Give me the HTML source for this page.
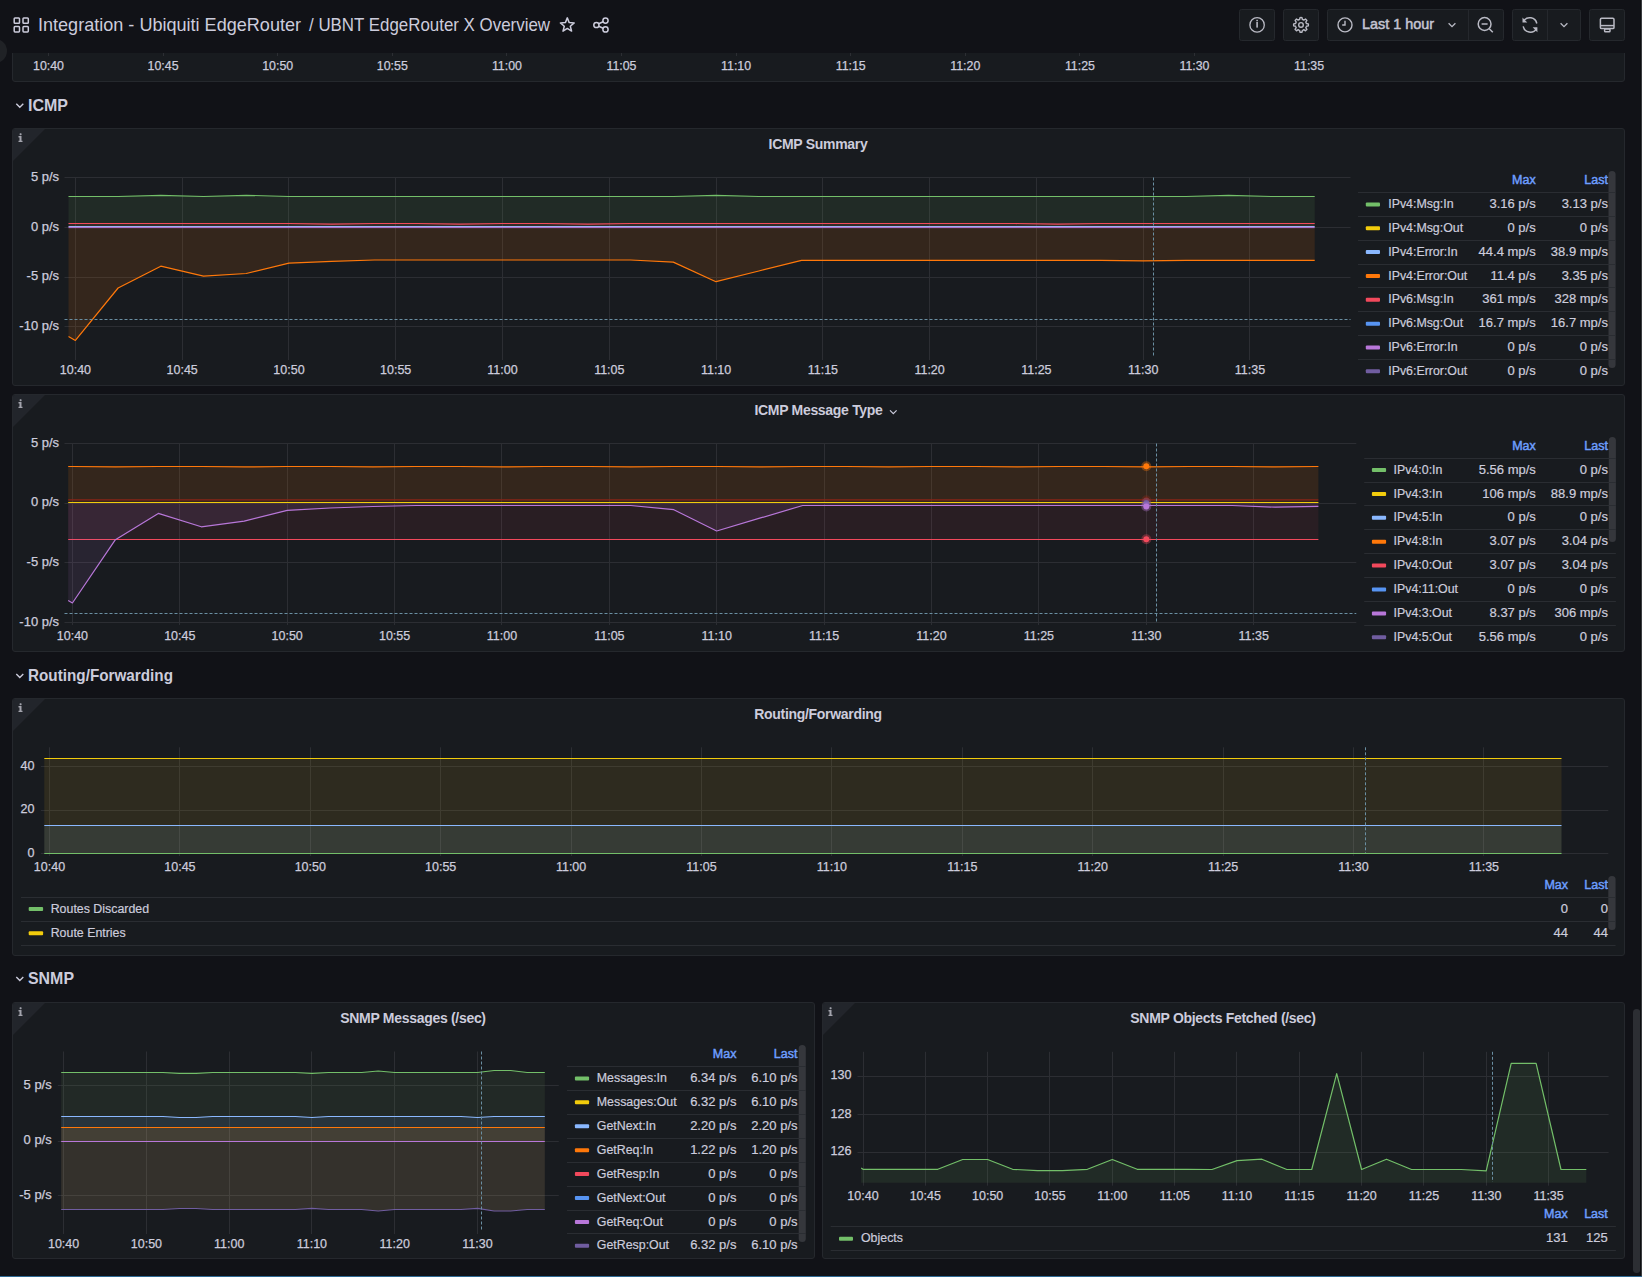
<!DOCTYPE html><html><head><meta charset="utf-8"><style>html,body{margin:0;padding:0;width:1642px;height:1277px;overflow:hidden;background:#111217}</style></head><body><svg width="1642" height="1277" viewBox="0 0 1642 1277" font-family='"Liberation Sans", sans-serif' style="position:absolute;left:0;top:0">
<rect x="0" y="0" width="1642" height="1277" rx="0" fill="#111217"  />
<g fill="none" stroke="#ccccdc" stroke-width="1.5">
<rect x="14.2" y="18" width="5.3" height="5.3" rx="0.8"/>
<rect x="23" y="18" width="5.3" height="5.3" rx="0.8"/>
<rect x="14.2" y="26.6" width="5.3" height="5.3" rx="0.8"/>
<rect x="23" y="26.6" width="5.3" height="5.3" rx="0.8"/>
</g>
<text x="38.0" y="30.9" font-size="18.2" text-anchor="start" fill="#ccccdc" font-weight="normal" textLength="263" lengthAdjust="spacingAndGlyphs">Integration - Ubiquiti EdgeRouter</text>
<text x="309.0" y="30.9" font-size="18.2" text-anchor="start" fill="#ccccdc" font-weight="normal" textLength="241" lengthAdjust="spacingAndGlyphs">/ UBNT EdgeRouter X Overview</text>
<polygon points="567.3,17.9 569.2,22.6 574.2,22.9 570.3,26.2 571.6,31.1 567.3,28.4 563.0,31.1 564.3,26.2 560.4,22.9 565.4,22.6" fill="none" stroke="#ccccdc" stroke-width="1.5" stroke-linejoin="round"/>
<g fill="none" stroke="#ccccdc" stroke-width="1.5"><circle cx="605.5" cy="20.6" r="2.6"/><circle cx="605.5" cy="29.4" r="2.6"/><circle cx="596.4" cy="25" r="2.6"/><line x1="598.7" y1="23.8" x2="603.2" y2="21.8"/><line x1="598.7" y1="26.2" x2="603.2" y2="28.2"/></g>
<rect x="1239.5" y="9.5" width="35" height="31" rx="2" fill="#181b1f" stroke="#25282d"/>
<rect x="1283.5" y="9.5" width="35" height="31" rx="2" fill="#181b1f" stroke="#25282d"/>
<rect x="1327.5" y="9.5" width="176" height="31" rx="2" fill="#181b1f" stroke="#25282d"/>
<rect x="1512.5" y="9.5" width="68" height="31" rx="2" fill="#181b1f" stroke="#25282d"/>
<rect x="1589.5" y="9.5" width="35" height="31" rx="2" fill="#181b1f" stroke="#25282d"/>
<line x1="1468.5" y1="10.0" x2="1468.5" y2="40.0" stroke="#25282d" stroke-width="1" />
<line x1="1547.5" y1="10.0" x2="1547.5" y2="40.0" stroke="#25282d" stroke-width="1" />
<g fill="none" stroke="#b9bac4" stroke-width="1.3"><circle cx="1257.1" cy="24.9" r="7.2"/></g>
<rect x="1256.3" y="21.8" width="1.6" height="5.8" rx="0" fill="#b9bac4"  />
<rect x="1256.3" y="19.8" width="1.6" height="1.3" rx="0" fill="#b9bac4"  />
<polygon points="1308.4,24.9 1308.3,25.9 1306.4,26.3 1306.2,27.0 1305.8,27.7 1306.9,29.4 1306.2,30.1 1305.5,30.8 1303.8,29.7 1303.1,30.1 1302.4,30.3 1302.0,32.2 1301.0,32.3 1300.0,32.2 1299.6,30.3 1298.9,30.1 1298.2,29.7 1296.5,30.8 1295.8,30.1 1295.1,29.4 1296.2,27.7 1295.8,27.0 1295.6,26.3 1293.7,25.9 1293.6,24.9 1293.7,23.9 1295.6,23.5 1295.8,22.8 1296.2,22.1 1295.1,20.4 1295.8,19.7 1296.5,19.0 1298.2,20.1 1298.9,19.7 1299.6,19.5 1300.0,17.6 1301.0,17.5 1302.0,17.6 1302.4,19.5 1303.1,19.7 1303.8,20.1 1305.5,19.0 1306.2,19.7 1306.9,20.4 1305.8,22.1 1306.2,22.8 1306.4,23.5 1308.3,23.9" fill="none" stroke="#b9bac4" stroke-width="1.4" stroke-linejoin="round"/>
<circle cx="1301" cy="24.9" r="2.3" fill="none" stroke="#b9bac4" stroke-width="1.4"/>
<g fill="none" stroke="#b9bac4" stroke-width="1.4"><circle cx="1345" cy="24.9" r="7"/><polyline points="1345,20.8 1345,25 1342.2,25"/></g>
<text x="1362.0" y="29.0" font-size="14.5" text-anchor="start" fill="#c4c4d2" font-weight="normal" textLength="72" lengthAdjust="spacingAndGlyphs" stroke="#c4c4d2" stroke-width="0.5">Last 1 hour</text>
<polyline points="1448.6,23.2 1452,26.6 1455.4,23.2" fill="none" stroke="#b9bac4" stroke-width="1.3"/>
<g fill="none" stroke="#b9bac4" stroke-width="1.5"><circle cx="1484.6" cy="24" r="6.4"/><line x1="1481.6" y1="24" x2="1487.6" y2="24"/><line x1="1489.3" y1="28.7" x2="1492.8" y2="32.2"/></g>
<g fill="none" stroke="#b9bac4" stroke-width="1.5"><path d="M1523.6,21.2 A7.2,7.2 0 0 1 1536.8,23.5"/><path d="M1536.5,28.6 A7.2,7.2 0 0 1 1523.2,26.3"/></g>
<polygon points="1522.5,17.6 1522.5,22.5 1527.3,22.5" fill="#b9bac4"/><polygon points="1537.4,32.2 1537.4,27.3 1532.7,27.3" fill="#b9bac4"/>
<polyline points="1560.6,23.2 1564,26.6 1567.4,23.2" fill="none" stroke="#b9bac4" stroke-width="1.3"/>
<g fill="none" stroke="#b9bac4" stroke-width="1.5"><rect x="1600.4" y="18.2" width="13.6" height="10.4" rx="1.2"/><line x1="1600.4" y1="25.6" x2="1614" y2="25.6"/><rect x="1604.6" y="29" width="5.4" height="2.8" rx="0.8"/></g>
<circle cx="-5" cy="51" r="12" fill="#202226"/>
<path d="M12.5,53 V79 Q12.5,81.5 15,81.5 H1622 Q1624.5,81.5 1624.5,79 V53" fill="#181b1f" stroke="#25282d"/>
<line x1="48.5" y1="53.0" x2="48.5" y2="56.0" stroke="#2c2e33" stroke-width="1" />
<text x="48.5" y="70.0" font-size="12" text-anchor="middle" fill="#ccccdc" font-weight="normal"  textLength="30.93" lengthAdjust="spacingAndGlyphs" stroke="#ccccdc" stroke-width="0.25">10:40</text>
<line x1="163.5" y1="53.0" x2="163.5" y2="56.0" stroke="#2c2e33" stroke-width="1" />
<text x="163.1" y="70.0" font-size="12" text-anchor="middle" fill="#ccccdc" font-weight="normal"  textLength="30.93" lengthAdjust="spacingAndGlyphs" stroke="#ccccdc" stroke-width="0.25">10:45</text>
<line x1="277.5" y1="53.0" x2="277.5" y2="56.0" stroke="#2c2e33" stroke-width="1" />
<text x="277.7" y="70.0" font-size="12" text-anchor="middle" fill="#ccccdc" font-weight="normal"  textLength="30.93" lengthAdjust="spacingAndGlyphs" stroke="#ccccdc" stroke-width="0.25">10:50</text>
<line x1="392.5" y1="53.0" x2="392.5" y2="56.0" stroke="#2c2e33" stroke-width="1" />
<text x="392.3" y="70.0" font-size="12" text-anchor="middle" fill="#ccccdc" font-weight="normal"  textLength="30.93" lengthAdjust="spacingAndGlyphs" stroke="#ccccdc" stroke-width="0.25">10:55</text>
<line x1="506.5" y1="53.0" x2="506.5" y2="56.0" stroke="#2c2e33" stroke-width="1" />
<text x="506.9" y="70.0" font-size="12" text-anchor="middle" fill="#ccccdc" font-weight="normal"  textLength="30.01" lengthAdjust="spacingAndGlyphs" stroke="#ccccdc" stroke-width="0.25">11:00</text>
<line x1="621.5" y1="53.0" x2="621.5" y2="56.0" stroke="#2c2e33" stroke-width="1" />
<text x="621.5" y="70.0" font-size="12" text-anchor="middle" fill="#ccccdc" font-weight="normal"  textLength="30.01" lengthAdjust="spacingAndGlyphs" stroke="#ccccdc" stroke-width="0.25">11:05</text>
<line x1="736.5" y1="53.0" x2="736.5" y2="56.0" stroke="#2c2e33" stroke-width="1" />
<text x="736.1" y="70.0" font-size="12" text-anchor="middle" fill="#ccccdc" font-weight="normal"  textLength="30.01" lengthAdjust="spacingAndGlyphs" stroke="#ccccdc" stroke-width="0.25">11:10</text>
<line x1="850.5" y1="53.0" x2="850.5" y2="56.0" stroke="#2c2e33" stroke-width="1" />
<text x="850.7" y="70.0" font-size="12" text-anchor="middle" fill="#ccccdc" font-weight="normal"  textLength="30.01" lengthAdjust="spacingAndGlyphs" stroke="#ccccdc" stroke-width="0.25">11:15</text>
<line x1="965.5" y1="53.0" x2="965.5" y2="56.0" stroke="#2c2e33" stroke-width="1" />
<text x="965.3" y="70.0" font-size="12" text-anchor="middle" fill="#ccccdc" font-weight="normal"  textLength="30.01" lengthAdjust="spacingAndGlyphs" stroke="#ccccdc" stroke-width="0.25">11:20</text>
<line x1="1079.5" y1="53.0" x2="1079.5" y2="56.0" stroke="#2c2e33" stroke-width="1" />
<text x="1079.9" y="70.0" font-size="12" text-anchor="middle" fill="#ccccdc" font-weight="normal"  textLength="30.01" lengthAdjust="spacingAndGlyphs" stroke="#ccccdc" stroke-width="0.25">11:25</text>
<line x1="1194.5" y1="53.0" x2="1194.5" y2="56.0" stroke="#2c2e33" stroke-width="1" />
<text x="1194.5" y="70.0" font-size="12" text-anchor="middle" fill="#ccccdc" font-weight="normal"  textLength="30.01" lengthAdjust="spacingAndGlyphs" stroke="#ccccdc" stroke-width="0.25">11:30</text>
<line x1="1309.5" y1="53.0" x2="1309.5" y2="56.0" stroke="#2c2e33" stroke-width="1" />
<text x="1309.1" y="70.0" font-size="12" text-anchor="middle" fill="#ccccdc" font-weight="normal"  textLength="30.01" lengthAdjust="spacingAndGlyphs" stroke="#ccccdc" stroke-width="0.25">11:35</text>
<polyline points="16.3,103.8 19.8,107.3 23.3,103.8" fill="none" stroke="#ccccdc" stroke-width="1.4"/>
<text x="28.0" y="110.6" font-size="16.5" text-anchor="start" fill="#ccccdc" font-weight="bold" textLength="40" lengthAdjust="spacingAndGlyphs">ICMP</text>
<rect x="12.5" y="128.5" width="1612" height="257" rx="2.5" fill="#181b1f" stroke="#25282d"/>
<path d="M13,131 Q13,129 15,129 L45,129 L13,161 Z" fill="#22252b"/>
<g fill="#a3a4ad"><rect x="19.6" y="133.3" width="2" height="1.9" rx="0.6"/><path d="M18.5,136.1 h3.0 v4.6 h1.0 v1.4 h-4.0 v-1.4 h1.0 v-3.2 h-1.0 z"/></g>
<text x="818.0" y="148.8" font-size="14" text-anchor="middle" fill="#ccccdc" font-weight="bold" letter-spacing="-0.3">ICMP Summary</text>
<line x1="64.5" y1="177.5" x2="1350.5" y2="177.5" stroke="#2c2e33" stroke-width="1" />
<text x="59.0" y="180.6" font-size="12" text-anchor="end" fill="#ccccdc" font-weight="normal"  textLength="28.09" lengthAdjust="spacingAndGlyphs" stroke="#ccccdc" stroke-width="0.25">5 p/s</text>
<line x1="64.5" y1="227.5" x2="1350.5" y2="227.5" stroke="#2c2e33" stroke-width="1" />
<text x="59.0" y="230.5" font-size="12" text-anchor="end" fill="#ccccdc" font-weight="normal"  textLength="28.09" lengthAdjust="spacingAndGlyphs" stroke="#ccccdc" stroke-width="0.25">0 p/s</text>
<line x1="64.5" y1="277.5" x2="1350.5" y2="277.5" stroke="#2c2e33" stroke-width="1" />
<text x="59.0" y="280.1" font-size="12" text-anchor="end" fill="#ccccdc" font-weight="normal"  textLength="32.41" lengthAdjust="spacingAndGlyphs" stroke="#ccccdc" stroke-width="0.25">-5 p/s</text>
<line x1="64.5" y1="326.5" x2="1350.5" y2="326.5" stroke="#2c2e33" stroke-width="1" />
<text x="59.0" y="329.7" font-size="12" text-anchor="end" fill="#ccccdc" font-weight="normal"  textLength="39.62" lengthAdjust="spacingAndGlyphs" stroke="#ccccdc" stroke-width="0.25">-10 p/s</text>
<line x1="75.5" y1="177.5" x2="75.5" y2="360.0" stroke="#2c2e33" stroke-width="1" />
<text x="75.4" y="374.0" font-size="12" text-anchor="middle" fill="#ccccdc" font-weight="normal"  textLength="31.23" lengthAdjust="spacingAndGlyphs" stroke="#ccccdc" stroke-width="0.25">10:40</text>
<line x1="182.5" y1="177.5" x2="182.5" y2="360.0" stroke="#2c2e33" stroke-width="1" />
<text x="182.2" y="374.0" font-size="12" text-anchor="middle" fill="#ccccdc" font-weight="normal"  textLength="31.23" lengthAdjust="spacingAndGlyphs" stroke="#ccccdc" stroke-width="0.25">10:45</text>
<line x1="288.5" y1="177.5" x2="288.5" y2="360.0" stroke="#2c2e33" stroke-width="1" />
<text x="289.0" y="374.0" font-size="12" text-anchor="middle" fill="#ccccdc" font-weight="normal"  textLength="31.23" lengthAdjust="spacingAndGlyphs" stroke="#ccccdc" stroke-width="0.25">10:50</text>
<line x1="395.5" y1="177.5" x2="395.5" y2="360.0" stroke="#2c2e33" stroke-width="1" />
<text x="395.7" y="374.0" font-size="12" text-anchor="middle" fill="#ccccdc" font-weight="normal"  textLength="31.23" lengthAdjust="spacingAndGlyphs" stroke="#ccccdc" stroke-width="0.25">10:55</text>
<line x1="502.5" y1="177.5" x2="502.5" y2="360.0" stroke="#2c2e33" stroke-width="1" />
<text x="502.5" y="374.0" font-size="12" text-anchor="middle" fill="#ccccdc" font-weight="normal"  textLength="30.30" lengthAdjust="spacingAndGlyphs" stroke="#ccccdc" stroke-width="0.25">11:00</text>
<line x1="609.5" y1="177.5" x2="609.5" y2="360.0" stroke="#2c2e33" stroke-width="1" />
<text x="609.3" y="374.0" font-size="12" text-anchor="middle" fill="#ccccdc" font-weight="normal"  textLength="30.30" lengthAdjust="spacingAndGlyphs" stroke="#ccccdc" stroke-width="0.25">11:05</text>
<line x1="716.5" y1="177.5" x2="716.5" y2="360.0" stroke="#2c2e33" stroke-width="1" />
<text x="716.1" y="374.0" font-size="12" text-anchor="middle" fill="#ccccdc" font-weight="normal"  textLength="30.30" lengthAdjust="spacingAndGlyphs" stroke="#ccccdc" stroke-width="0.25">11:10</text>
<line x1="822.5" y1="177.5" x2="822.5" y2="360.0" stroke="#2c2e33" stroke-width="1" />
<text x="822.9" y="374.0" font-size="12" text-anchor="middle" fill="#ccccdc" font-weight="normal"  textLength="30.30" lengthAdjust="spacingAndGlyphs" stroke="#ccccdc" stroke-width="0.25">11:15</text>
<line x1="929.5" y1="177.5" x2="929.5" y2="360.0" stroke="#2c2e33" stroke-width="1" />
<text x="929.6" y="374.0" font-size="12" text-anchor="middle" fill="#ccccdc" font-weight="normal"  textLength="30.30" lengthAdjust="spacingAndGlyphs" stroke="#ccccdc" stroke-width="0.25">11:20</text>
<line x1="1036.5" y1="177.5" x2="1036.5" y2="360.0" stroke="#2c2e33" stroke-width="1" />
<text x="1036.4" y="374.0" font-size="12" text-anchor="middle" fill="#ccccdc" font-weight="normal"  textLength="30.30" lengthAdjust="spacingAndGlyphs" stroke="#ccccdc" stroke-width="0.25">11:25</text>
<line x1="1143.5" y1="177.5" x2="1143.5" y2="360.0" stroke="#2c2e33" stroke-width="1" />
<text x="1143.2" y="374.0" font-size="12" text-anchor="middle" fill="#ccccdc" font-weight="normal"  textLength="30.30" lengthAdjust="spacingAndGlyphs" stroke="#ccccdc" stroke-width="0.25">11:30</text>
<line x1="1249.5" y1="177.5" x2="1249.5" y2="360.0" stroke="#2c2e33" stroke-width="1" />
<text x="1250.0" y="374.0" font-size="12" text-anchor="middle" fill="#ccccdc" font-weight="normal"  textLength="30.30" lengthAdjust="spacingAndGlyphs" stroke="#ccccdc" stroke-width="0.25">11:35</text>
<polygon points="68.5,227.4 68.5,196.5 75.4,196.5 118.1,196.5 160.8,195.3 203.5,196.5 246.2,195.3 289.0,196.5 331.7,196.5 374.4,196.5 417.1,196.5 459.8,196.5 502.5,196.5 545.2,196.5 587.9,196.5 630.6,196.5 673.3,196.5 716.0,195.3 758.8,196.5 801.5,196.5 844.2,196.5 886.9,196.5 929.6,196.5 972.3,196.5 1015.0,196.5 1057.7,196.5 1100.4,196.5 1143.2,196.5 1185.9,196.5 1228.6,195.3 1271.3,196.5 1314.7,196.5 1314.7,227.4" fill="#73bf69" fill-opacity="0.1"/>
<polyline points="68.5,196.5 75.4,196.5 118.1,196.5 160.8,195.3 203.5,196.5 246.2,195.3 289.0,196.5 331.7,196.5 374.4,196.5 417.1,196.5 459.8,196.5 502.5,196.5 545.2,196.5 587.9,196.5 630.6,196.5 673.3,196.5 716.0,195.3 758.8,196.5 801.5,196.5 844.2,196.5 886.9,196.5 929.6,196.5 972.3,196.5 1015.0,196.5 1057.7,196.5 1100.4,196.5 1143.2,196.5 1185.9,196.5 1228.6,195.3 1271.3,196.5 1314.7,196.5" fill="none" stroke="#73bf69" stroke-width="1.2" stroke-linejoin="round"/>
<polygon points="68.5,227.4 68.5,336.5 75.4,340.4 118.1,288.0 160.8,266.2 203.5,276.2 246.2,273.5 289.0,263.1 331.7,261.3 374.4,260.0 417.1,260.0 459.8,260.0 502.5,260.0 545.2,260.0 587.9,260.0 630.6,260.0 673.3,262.1 716.0,281.7 758.8,271.0 801.5,260.4 844.2,260.4 886.9,260.4 929.6,260.4 972.3,260.4 1015.0,260.4 1057.7,260.4 1100.4,260.4 1143.2,260.9 1185.9,260.4 1228.6,260.4 1271.3,260.4 1314.7,260.4 1314.7,227.4" fill="#ff780a" fill-opacity="0.12"/>
<polyline points="68.5,336.5 75.4,340.4 118.1,288.0 160.8,266.2 203.5,276.2 246.2,273.5 289.0,263.1 331.7,261.3 374.4,260.0 417.1,260.0 459.8,260.0 502.5,260.0 545.2,260.0 587.9,260.0 630.6,260.0 673.3,262.1 716.0,281.7 758.8,271.0 801.5,260.4 844.2,260.4 886.9,260.4 929.6,260.4 972.3,260.4 1015.0,260.4 1057.7,260.4 1100.4,260.4 1143.2,260.9 1185.9,260.4 1228.6,260.4 1271.3,260.4 1314.7,260.4" fill="none" stroke="#ff780a" stroke-width="1.2" stroke-linejoin="round"/>
<polygon points="68.5,227.4 68.5,223.5 75.4,223.5 118.1,223.5 160.8,223.5 203.5,223.5 246.2,223.5 289.0,223.5 331.7,224.2 374.4,223.5 417.1,223.5 459.8,224.2 502.5,223.5 545.2,223.5 587.9,224.2 630.6,223.5 673.3,223.5 716.0,223.5 758.8,223.5 801.5,223.5 844.2,223.5 886.9,223.5 929.6,223.5 972.3,223.5 1015.0,223.5 1057.7,224.2 1100.4,223.5 1143.2,223.5 1185.9,223.5 1228.6,223.5 1271.3,223.5 1314.7,223.5 1314.7,227.4" fill="#f2495c" fill-opacity="0.08"/>
<polyline points="68.5,223.5 75.4,223.5 118.1,223.5 160.8,223.5 203.5,223.5 246.2,223.5 289.0,223.5 331.7,224.2 374.4,223.5 417.1,223.5 459.8,224.2 502.5,223.5 545.2,223.5 587.9,224.2 630.6,223.5 673.3,223.5 716.0,223.5 758.8,223.5 801.5,223.5 844.2,223.5 886.9,223.5 929.6,223.5 972.3,223.5 1015.0,223.5 1057.7,224.2 1100.4,223.5 1143.2,223.5 1185.9,223.5 1228.6,223.5 1271.3,223.5 1314.7,223.5" fill="none" stroke="#f2495c" stroke-width="1.2" stroke-linejoin="round"/>
<polyline points="68.5,227.6 1314.7,227.6" fill="none" stroke="#b877d9" stroke-width="1.0" stroke-linejoin="round"/>
<polyline points="68.5,226.5 1314.7,226.5" fill="none" stroke="#9fb0f5" stroke-width="1.2" stroke-linejoin="round"/>
<line x1="1153.5" y1="177.5" x2="1153.5" y2="356.0" stroke="#6a8fa2" stroke-width="1" stroke-dasharray="3,2"/>
<line x1="64.5" y1="319.5" x2="1350.5" y2="319.5" stroke="#6a8fa2" stroke-width="1" stroke-dasharray="3,2"/>
<text x="1535.7" y="184.0" font-size="12.5" text-anchor="end" fill="#6e9fff" font-weight="normal"  stroke="#6e9fff" stroke-width="0.45">Max</text>
<text x="1607.9" y="184.0" font-size="12.5" text-anchor="end" fill="#6e9fff" font-weight="normal"  stroke="#6e9fff" stroke-width="0.45">Last</text>
<rect x="1608.5" y="171" width="7.099999999999909" height="197" rx="3.5" fill="#35373c"/>
<line x1="1358.0" y1="192.5" x2="1615.6" y2="192.5" stroke="#2a2d32" stroke-width="1" />
<line x1="1358.0" y1="216.5" x2="1615.6" y2="216.5" stroke="#2a2d32" stroke-width="1" />
<line x1="1358.0" y1="240.5" x2="1615.6" y2="240.5" stroke="#2a2d32" stroke-width="1" />
<line x1="1358.0" y1="264.5" x2="1615.6" y2="264.5" stroke="#2a2d32" stroke-width="1" />
<line x1="1358.0" y1="287.5" x2="1615.6" y2="287.5" stroke="#2a2d32" stroke-width="1" />
<line x1="1358.0" y1="311.5" x2="1615.6" y2="311.5" stroke="#2a2d32" stroke-width="1" />
<line x1="1358.0" y1="335.5" x2="1615.6" y2="335.5" stroke="#2a2d32" stroke-width="1" />
<line x1="1358.0" y1="359.5" x2="1615.6" y2="359.5" stroke="#2a2d32" stroke-width="1" />
<rect x="1365.8" y="202.4" width="14.2" height="4" rx="1" fill="#73bf69"/>
<text x="1388.2" y="208.0" font-size="12.5" text-anchor="start" fill="#ccccdc" font-weight="normal"  textLength="65.33" lengthAdjust="spacingAndGlyphs" stroke="#ccccdc" stroke-width="0.2">IPv4:Msg:In</text>
<text x="1535.7" y="208.0" font-size="12.5" text-anchor="end" fill="#ccccdc" font-weight="normal"  textLength="46.25" lengthAdjust="spacingAndGlyphs" stroke="#ccccdc" stroke-width="0.2">3.16 p/s</text>
<text x="1607.9" y="208.0" font-size="12.5" text-anchor="end" fill="#ccccdc" font-weight="normal"  textLength="46.25" lengthAdjust="spacingAndGlyphs" stroke="#ccccdc" stroke-width="0.2">3.13 p/s</text>
<rect x="1365.8" y="226.25" width="14.2" height="4" rx="1" fill="#f2cc0c"/>
<text x="1388.2" y="231.8" font-size="12.5" text-anchor="start" fill="#ccccdc" font-weight="normal"  textLength="74.96" lengthAdjust="spacingAndGlyphs" stroke="#ccccdc" stroke-width="0.2">IPv4:Msg:Out</text>
<text x="1535.7" y="231.8" font-size="12.5" text-anchor="end" fill="#ccccdc" font-weight="normal"  textLength="28.18" lengthAdjust="spacingAndGlyphs" stroke="#ccccdc" stroke-width="0.2">0 p/s</text>
<text x="1607.9" y="231.8" font-size="12.5" text-anchor="end" fill="#ccccdc" font-weight="normal"  textLength="28.18" lengthAdjust="spacingAndGlyphs" stroke="#ccccdc" stroke-width="0.2">0 p/s</text>
<rect x="1365.8" y="250.1" width="14.2" height="4" rx="1" fill="#8ab8ff"/>
<text x="1388.2" y="255.7" font-size="12.5" text-anchor="start" fill="#ccccdc" font-weight="normal"  textLength="69.45" lengthAdjust="spacingAndGlyphs" stroke="#ccccdc" stroke-width="0.2">IPv4:Error:In</text>
<text x="1535.7" y="255.7" font-size="12.5" text-anchor="end" fill="#ccccdc" font-weight="normal"  textLength="57.08" lengthAdjust="spacingAndGlyphs" stroke="#ccccdc" stroke-width="0.2">44.4 mp/s</text>
<text x="1607.9" y="255.7" font-size="12.5" text-anchor="end" fill="#ccccdc" font-weight="normal"  textLength="57.08" lengthAdjust="spacingAndGlyphs" stroke="#ccccdc" stroke-width="0.2">38.9 mp/s</text>
<rect x="1365.8" y="273.95" width="14.2" height="4" rx="1" fill="#ff780a"/>
<text x="1388.2" y="279.6" font-size="12.5" text-anchor="start" fill="#ccccdc" font-weight="normal"  textLength="79.08" lengthAdjust="spacingAndGlyphs" stroke="#ccccdc" stroke-width="0.2">IPv4:Error:Out</text>
<text x="1535.7" y="279.6" font-size="12.5" text-anchor="end" fill="#ccccdc" font-weight="normal"  textLength="45.29" lengthAdjust="spacingAndGlyphs" stroke="#ccccdc" stroke-width="0.2">11.4 p/s</text>
<text x="1607.9" y="279.6" font-size="12.5" text-anchor="end" fill="#ccccdc" font-weight="normal"  textLength="46.25" lengthAdjust="spacingAndGlyphs" stroke="#ccccdc" stroke-width="0.2">3.35 p/s</text>
<rect x="1365.8" y="297.79999999999995" width="14.2" height="4" rx="1" fill="#f2495c"/>
<text x="1388.2" y="303.4" font-size="12.5" text-anchor="start" fill="#ccccdc" font-weight="normal"  textLength="65.33" lengthAdjust="spacingAndGlyphs" stroke="#ccccdc" stroke-width="0.2">IPv6:Msg:In</text>
<text x="1535.7" y="303.4" font-size="12.5" text-anchor="end" fill="#ccccdc" font-weight="normal"  textLength="53.47" lengthAdjust="spacingAndGlyphs" stroke="#ccccdc" stroke-width="0.2">361 mp/s</text>
<text x="1607.9" y="303.4" font-size="12.5" text-anchor="end" fill="#ccccdc" font-weight="normal"  textLength="53.47" lengthAdjust="spacingAndGlyphs" stroke="#ccccdc" stroke-width="0.2">328 mp/s</text>
<rect x="1365.8" y="321.65" width="14.2" height="4" rx="1" fill="#5794f2"/>
<text x="1388.2" y="327.2" font-size="12.5" text-anchor="start" fill="#ccccdc" font-weight="normal"  textLength="74.96" lengthAdjust="spacingAndGlyphs" stroke="#ccccdc" stroke-width="0.2">IPv6:Msg:Out</text>
<text x="1535.7" y="327.2" font-size="12.5" text-anchor="end" fill="#ccccdc" font-weight="normal"  textLength="57.08" lengthAdjust="spacingAndGlyphs" stroke="#ccccdc" stroke-width="0.2">16.7 mp/s</text>
<text x="1607.9" y="327.2" font-size="12.5" text-anchor="end" fill="#ccccdc" font-weight="normal"  textLength="57.08" lengthAdjust="spacingAndGlyphs" stroke="#ccccdc" stroke-width="0.2">16.7 mp/s</text>
<rect x="1365.8" y="345.5" width="14.2" height="4" rx="1" fill="#b877d9"/>
<text x="1388.2" y="351.1" font-size="12.5" text-anchor="start" fill="#ccccdc" font-weight="normal"  textLength="69.45" lengthAdjust="spacingAndGlyphs" stroke="#ccccdc" stroke-width="0.2">IPv6:Error:In</text>
<text x="1535.7" y="351.1" font-size="12.5" text-anchor="end" fill="#ccccdc" font-weight="normal"  textLength="28.18" lengthAdjust="spacingAndGlyphs" stroke="#ccccdc" stroke-width="0.2">0 p/s</text>
<text x="1607.9" y="351.1" font-size="12.5" text-anchor="end" fill="#ccccdc" font-weight="normal"  textLength="28.18" lengthAdjust="spacingAndGlyphs" stroke="#ccccdc" stroke-width="0.2">0 p/s</text>
<rect x="1365.8" y="369.35" width="14.2" height="4" rx="1" fill="#705da0"/>
<text x="1388.2" y="375.0" font-size="12.5" text-anchor="start" fill="#ccccdc" font-weight="normal"  textLength="79.08" lengthAdjust="spacingAndGlyphs" stroke="#ccccdc" stroke-width="0.2">IPv6:Error:Out</text>
<text x="1535.7" y="375.0" font-size="12.5" text-anchor="end" fill="#ccccdc" font-weight="normal"  textLength="28.18" lengthAdjust="spacingAndGlyphs" stroke="#ccccdc" stroke-width="0.2">0 p/s</text>
<text x="1607.9" y="375.0" font-size="12.5" text-anchor="end" fill="#ccccdc" font-weight="normal"  textLength="28.18" lengthAdjust="spacingAndGlyphs" stroke="#ccccdc" stroke-width="0.2">0 p/s</text>
<rect x="12.5" y="394.5" width="1612" height="257" rx="2.5" fill="#181b1f" stroke="#25282d"/>
<path d="M13,397 Q13,395 15,395 L45,395 L13,427 Z" fill="#22252b"/>
<g fill="#a3a4ad"><rect x="19.6" y="399.3" width="2" height="1.9" rx="0.6"/><path d="M18.5,402.1 h3.0 v4.6 h1.0 v1.4 h-4.0 v-1.4 h1.0 v-3.2 h-1.0 z"/></g>
<text x="818.5" y="414.8" font-size="14" text-anchor="middle" fill="#ccccdc" font-weight="bold" letter-spacing="-0.3">ICMP Message Type</text>
<polyline points="890,410.3 893.3,413.6 896.6,410.3" fill="none" stroke="#ccccdc" stroke-width="1.2"/>
<line x1="64.5" y1="443.5" x2="1356.3" y2="443.5" stroke="#2c2e33" stroke-width="1" />
<text x="59.0" y="446.6" font-size="12" text-anchor="end" fill="#ccccdc" font-weight="normal"  textLength="28.09" lengthAdjust="spacingAndGlyphs" stroke="#ccccdc" stroke-width="0.25">5 p/s</text>
<line x1="64.5" y1="503.5" x2="1356.3" y2="503.5" stroke="#2c2e33" stroke-width="1" />
<text x="59.0" y="506.4" font-size="12" text-anchor="end" fill="#ccccdc" font-weight="normal"  textLength="28.09" lengthAdjust="spacingAndGlyphs" stroke="#ccccdc" stroke-width="0.25">0 p/s</text>
<line x1="64.5" y1="562.5" x2="1356.3" y2="562.5" stroke="#2c2e33" stroke-width="1" />
<text x="59.0" y="566.0" font-size="12" text-anchor="end" fill="#ccccdc" font-weight="normal"  textLength="32.41" lengthAdjust="spacingAndGlyphs" stroke="#ccccdc" stroke-width="0.25">-5 p/s</text>
<line x1="64.5" y1="622.5" x2="1356.3" y2="622.5" stroke="#2c2e33" stroke-width="1" />
<text x="59.0" y="625.6" font-size="12" text-anchor="end" fill="#ccccdc" font-weight="normal"  textLength="39.62" lengthAdjust="spacingAndGlyphs" stroke="#ccccdc" stroke-width="0.25">-10 p/s</text>
<line x1="72.5" y1="443.5" x2="72.5" y2="625.0" stroke="#2c2e33" stroke-width="1" />
<text x="72.4" y="640.0" font-size="12" text-anchor="middle" fill="#ccccdc" font-weight="normal"  textLength="31.23" lengthAdjust="spacingAndGlyphs" stroke="#ccccdc" stroke-width="0.25">10:40</text>
<line x1="179.5" y1="443.5" x2="179.5" y2="625.0" stroke="#2c2e33" stroke-width="1" />
<text x="179.8" y="640.0" font-size="12" text-anchor="middle" fill="#ccccdc" font-weight="normal"  textLength="31.23" lengthAdjust="spacingAndGlyphs" stroke="#ccccdc" stroke-width="0.25">10:45</text>
<line x1="287.5" y1="443.5" x2="287.5" y2="625.0" stroke="#2c2e33" stroke-width="1" />
<text x="287.2" y="640.0" font-size="12" text-anchor="middle" fill="#ccccdc" font-weight="normal"  textLength="31.23" lengthAdjust="spacingAndGlyphs" stroke="#ccccdc" stroke-width="0.25">10:50</text>
<line x1="394.5" y1="443.5" x2="394.5" y2="625.0" stroke="#2c2e33" stroke-width="1" />
<text x="394.6" y="640.0" font-size="12" text-anchor="middle" fill="#ccccdc" font-weight="normal"  textLength="31.23" lengthAdjust="spacingAndGlyphs" stroke="#ccccdc" stroke-width="0.25">10:55</text>
<line x1="501.5" y1="443.5" x2="501.5" y2="625.0" stroke="#2c2e33" stroke-width="1" />
<text x="502.0" y="640.0" font-size="12" text-anchor="middle" fill="#ccccdc" font-weight="normal"  textLength="30.30" lengthAdjust="spacingAndGlyphs" stroke="#ccccdc" stroke-width="0.25">11:00</text>
<line x1="609.5" y1="443.5" x2="609.5" y2="625.0" stroke="#2c2e33" stroke-width="1" />
<text x="609.4" y="640.0" font-size="12" text-anchor="middle" fill="#ccccdc" font-weight="normal"  textLength="30.30" lengthAdjust="spacingAndGlyphs" stroke="#ccccdc" stroke-width="0.25">11:05</text>
<line x1="716.5" y1="443.5" x2="716.5" y2="625.0" stroke="#2c2e33" stroke-width="1" />
<text x="716.7" y="640.0" font-size="12" text-anchor="middle" fill="#ccccdc" font-weight="normal"  textLength="30.30" lengthAdjust="spacingAndGlyphs" stroke="#ccccdc" stroke-width="0.25">11:10</text>
<line x1="824.5" y1="443.5" x2="824.5" y2="625.0" stroke="#2c2e33" stroke-width="1" />
<text x="824.1" y="640.0" font-size="12" text-anchor="middle" fill="#ccccdc" font-weight="normal"  textLength="30.30" lengthAdjust="spacingAndGlyphs" stroke="#ccccdc" stroke-width="0.25">11:15</text>
<line x1="931.5" y1="443.5" x2="931.5" y2="625.0" stroke="#2c2e33" stroke-width="1" />
<text x="931.5" y="640.0" font-size="12" text-anchor="middle" fill="#ccccdc" font-weight="normal"  textLength="30.30" lengthAdjust="spacingAndGlyphs" stroke="#ccccdc" stroke-width="0.25">11:20</text>
<line x1="1038.5" y1="443.5" x2="1038.5" y2="625.0" stroke="#2c2e33" stroke-width="1" />
<text x="1038.9" y="640.0" font-size="12" text-anchor="middle" fill="#ccccdc" font-weight="normal"  textLength="30.30" lengthAdjust="spacingAndGlyphs" stroke="#ccccdc" stroke-width="0.25">11:25</text>
<line x1="1146.5" y1="443.5" x2="1146.5" y2="625.0" stroke="#2c2e33" stroke-width="1" />
<text x="1146.3" y="640.0" font-size="12" text-anchor="middle" fill="#ccccdc" font-weight="normal"  textLength="30.30" lengthAdjust="spacingAndGlyphs" stroke="#ccccdc" stroke-width="0.25">11:30</text>
<line x1="1253.5" y1="443.5" x2="1253.5" y2="625.0" stroke="#2c2e33" stroke-width="1" />
<text x="1253.7" y="640.0" font-size="12" text-anchor="middle" fill="#ccccdc" font-weight="normal"  textLength="30.30" lengthAdjust="spacingAndGlyphs" stroke="#ccccdc" stroke-width="0.25">11:35</text>
<polygon points="68.2,503.3 68.2,466.5 72.4,466.5 115.4,466.9 158.3,466.5 201.3,466.5 244.2,466.9 287.2,466.5 330.1,466.5 373.1,466.9 416.0,466.5 459.0,466.5 502.0,466.9 544.9,466.5 587.9,466.5 630.8,466.9 673.8,466.5 716.7,466.5 759.7,466.9 802.7,466.5 845.6,466.5 888.6,466.9 931.5,466.5 974.5,466.5 1017.4,466.9 1060.4,466.5 1103.3,466.5 1146.3,466.9 1189.3,466.5 1232.2,466.5 1275.2,466.9 1318.4,466.5 1318.4,503.3" fill="#ff780a" fill-opacity="0.12"/>
<polyline points="68.2,466.5 72.4,466.5 115.4,466.9 158.3,466.5 201.3,466.5 244.2,466.9 287.2,466.5 330.1,466.5 373.1,466.9 416.0,466.5 459.0,466.5 502.0,466.9 544.9,466.5 587.9,466.5 630.8,466.9 673.8,466.5 716.7,466.5 759.7,466.9 802.7,466.5 845.6,466.5 888.6,466.9 931.5,466.5 974.5,466.5 1017.4,466.9 1060.4,466.5 1103.3,466.5 1146.3,466.9 1189.3,466.5 1232.2,466.5 1275.2,466.9 1318.4,466.5" fill="none" stroke="#ff780a" stroke-width="1.2" stroke-linejoin="round"/>
<polygon points="68.2,503.3 68.2,539.5 1318.4,539.5 1318.4,503.3" fill="#f2495c" fill-opacity="0.08"/>
<polyline points="68.2,539.5 1318.4,539.5" fill="none" stroke="#f2495c" stroke-width="1.2" stroke-linejoin="round"/>
<polygon points="68.2,503.3 68.2,600.6 72.4,603.0 115.4,539.7 158.3,513.4 201.3,526.8 244.2,521.2 287.2,510.4 330.1,508.0 373.1,506.5 416.0,505.5 459.0,505.5 502.0,505.5 544.9,505.5 587.9,505.5 630.8,505.5 673.8,509.7 716.7,531.0 759.7,518.2 802.7,505.5 845.6,505.5 888.6,505.5 931.5,505.5 974.5,505.5 1017.4,505.5 1060.4,505.5 1103.3,505.5 1146.3,505.5 1189.3,505.5 1232.2,505.5 1275.2,507.2 1318.4,506.3 1318.4,503.3" fill="#b877d9" fill-opacity="0.1"/>
<polyline points="68.2,600.6 72.4,603.0 115.4,539.7 158.3,513.4 201.3,526.8 244.2,521.2 287.2,510.4 330.1,508.0 373.1,506.5 416.0,505.5 459.0,505.5 502.0,505.5 544.9,505.5 587.9,505.5 630.8,505.5 673.8,509.7 716.7,531.0 759.7,518.2 802.7,505.5 845.6,505.5 888.6,505.5 931.5,505.5 974.5,505.5 1017.4,505.5 1060.4,505.5 1103.3,505.5 1146.3,505.5 1189.3,505.5 1232.2,505.5 1275.2,507.2 1318.4,506.3" fill="none" stroke="#b877d9" stroke-width="1.2" stroke-linejoin="round"/>
<polyline points="68.2,499.9 1318.4,499.9" fill="none" stroke="#8a2416" stroke-width="1.2" stroke-linejoin="round"/>
<polyline points="68.2,502.5 1318.4,502.5" fill="none" stroke="#f2cc0c" stroke-width="1.2" stroke-linejoin="round"/>
<line x1="1156.5" y1="443.5" x2="1156.5" y2="622.0" stroke="#6a8fa2" stroke-width="1" stroke-dasharray="3,2"/>
<line x1="64.5" y1="613.5" x2="1356.3" y2="613.5" stroke="#6a8fa2" stroke-width="1" stroke-dasharray="3,2"/>
<circle cx="1146.3" cy="466.2" r="5" fill="#ff780a" fill-opacity="0.35"/><circle cx="1146.3" cy="466.2" r="3" fill="#ff780a"/>
<circle cx="1146.3" cy="500.2" r="5" fill="#8c2a1c" fill-opacity="0.35"/><circle cx="1146.3" cy="500.2" r="3" fill="#8c2a1c"/>
<circle cx="1146.3" cy="503" r="5" fill="#705da0" fill-opacity="0.35"/><circle cx="1146.3" cy="503" r="3" fill="#705da0"/>
<circle cx="1146.3" cy="506.5" r="5" fill="#b877d9" fill-opacity="0.35"/><circle cx="1146.3" cy="506.5" r="3" fill="#b877d9"/>
<circle cx="1146.3" cy="539.2" r="5" fill="#f2495c" fill-opacity="0.35"/><circle cx="1146.3" cy="539.2" r="3" fill="#f2495c"/>
<text x="1535.8" y="449.9" font-size="12.5" text-anchor="end" fill="#6e9fff" font-weight="normal"  stroke="#6e9fff" stroke-width="0.45">Max</text>
<text x="1607.9" y="449.9" font-size="12.5" text-anchor="end" fill="#6e9fff" font-weight="normal"  stroke="#6e9fff" stroke-width="0.45">Last</text>
<rect x="1608.8" y="437" width="7.100000000000136" height="105" rx="3.5" fill="#35373c"/>
<line x1="1364.2" y1="458.5" x2="1615.9" y2="458.5" stroke="#2a2d32" stroke-width="1" />
<line x1="1364.2" y1="482.5" x2="1615.9" y2="482.5" stroke="#2a2d32" stroke-width="1" />
<line x1="1364.2" y1="505.5" x2="1615.9" y2="505.5" stroke="#2a2d32" stroke-width="1" />
<line x1="1364.2" y1="529.5" x2="1615.9" y2="529.5" stroke="#2a2d32" stroke-width="1" />
<line x1="1364.2" y1="553.5" x2="1615.9" y2="553.5" stroke="#2a2d32" stroke-width="1" />
<line x1="1364.2" y1="577.5" x2="1615.9" y2="577.5" stroke="#2a2d32" stroke-width="1" />
<line x1="1364.2" y1="601.5" x2="1615.9" y2="601.5" stroke="#2a2d32" stroke-width="1" />
<line x1="1364.2" y1="625.5" x2="1615.9" y2="625.5" stroke="#2a2d32" stroke-width="1" />
<rect x="1371.9" y="468.0" width="14.2" height="4" rx="1" fill="#73bf69"/>
<text x="1393.6" y="473.6" font-size="12.5" text-anchor="start" fill="#ccccdc" font-weight="normal"  textLength="48.84" lengthAdjust="spacingAndGlyphs" stroke="#ccccdc" stroke-width="0.2">IPv4:0:In</text>
<text x="1535.8" y="473.6" font-size="12.5" text-anchor="end" fill="#ccccdc" font-weight="normal"  textLength="57.08" lengthAdjust="spacingAndGlyphs" stroke="#ccccdc" stroke-width="0.2">5.56 mp/s</text>
<text x="1607.9" y="473.6" font-size="12.5" text-anchor="end" fill="#ccccdc" font-weight="normal"  textLength="28.18" lengthAdjust="spacingAndGlyphs" stroke="#ccccdc" stroke-width="0.2">0 p/s</text>
<rect x="1371.9" y="491.9" width="14.2" height="4" rx="1" fill="#f2cc0c"/>
<text x="1393.6" y="497.5" font-size="12.5" text-anchor="start" fill="#ccccdc" font-weight="normal"  textLength="48.84" lengthAdjust="spacingAndGlyphs" stroke="#ccccdc" stroke-width="0.2">IPv4:3:In</text>
<text x="1535.8" y="497.5" font-size="12.5" text-anchor="end" fill="#ccccdc" font-weight="normal"  textLength="53.47" lengthAdjust="spacingAndGlyphs" stroke="#ccccdc" stroke-width="0.2">106 mp/s</text>
<text x="1607.9" y="497.5" font-size="12.5" text-anchor="end" fill="#ccccdc" font-weight="normal"  textLength="57.08" lengthAdjust="spacingAndGlyphs" stroke="#ccccdc" stroke-width="0.2">88.9 mp/s</text>
<rect x="1371.9" y="515.8000000000001" width="14.2" height="4" rx="1" fill="#8ab8ff"/>
<text x="1393.6" y="521.4" font-size="12.5" text-anchor="start" fill="#ccccdc" font-weight="normal"  textLength="48.84" lengthAdjust="spacingAndGlyphs" stroke="#ccccdc" stroke-width="0.2">IPv4:5:In</text>
<text x="1535.8" y="521.4" font-size="12.5" text-anchor="end" fill="#ccccdc" font-weight="normal"  textLength="28.18" lengthAdjust="spacingAndGlyphs" stroke="#ccccdc" stroke-width="0.2">0 p/s</text>
<text x="1607.9" y="521.4" font-size="12.5" text-anchor="end" fill="#ccccdc" font-weight="normal"  textLength="28.18" lengthAdjust="spacingAndGlyphs" stroke="#ccccdc" stroke-width="0.2">0 p/s</text>
<rect x="1371.9" y="539.6999999999999" width="14.2" height="4" rx="1" fill="#ff780a"/>
<text x="1393.6" y="545.3" font-size="12.5" text-anchor="start" fill="#ccccdc" font-weight="normal"  textLength="48.84" lengthAdjust="spacingAndGlyphs" stroke="#ccccdc" stroke-width="0.2">IPv4:8:In</text>
<text x="1535.8" y="545.3" font-size="12.5" text-anchor="end" fill="#ccccdc" font-weight="normal"  textLength="46.25" lengthAdjust="spacingAndGlyphs" stroke="#ccccdc" stroke-width="0.2">3.07 p/s</text>
<text x="1607.9" y="545.3" font-size="12.5" text-anchor="end" fill="#ccccdc" font-weight="normal"  textLength="46.25" lengthAdjust="spacingAndGlyphs" stroke="#ccccdc" stroke-width="0.2">3.04 p/s</text>
<rect x="1371.9" y="563.6" width="14.2" height="4" rx="1" fill="#f2495c"/>
<text x="1393.6" y="569.2" font-size="12.5" text-anchor="start" fill="#ccccdc" font-weight="normal"  textLength="58.46" lengthAdjust="spacingAndGlyphs" stroke="#ccccdc" stroke-width="0.2">IPv4:0:Out</text>
<text x="1535.8" y="569.2" font-size="12.5" text-anchor="end" fill="#ccccdc" font-weight="normal"  textLength="46.25" lengthAdjust="spacingAndGlyphs" stroke="#ccccdc" stroke-width="0.2">3.07 p/s</text>
<text x="1607.9" y="569.2" font-size="12.5" text-anchor="end" fill="#ccccdc" font-weight="normal"  textLength="46.25" lengthAdjust="spacingAndGlyphs" stroke="#ccccdc" stroke-width="0.2">3.04 p/s</text>
<rect x="1371.9" y="587.5" width="14.2" height="4" rx="1" fill="#5794f2"/>
<text x="1393.6" y="593.1" font-size="12.5" text-anchor="start" fill="#ccccdc" font-weight="normal"  textLength="64.43" lengthAdjust="spacingAndGlyphs" stroke="#ccccdc" stroke-width="0.2">IPv4:11:Out</text>
<text x="1535.8" y="593.1" font-size="12.5" text-anchor="end" fill="#ccccdc" font-weight="normal"  textLength="28.18" lengthAdjust="spacingAndGlyphs" stroke="#ccccdc" stroke-width="0.2">0 p/s</text>
<text x="1607.9" y="593.1" font-size="12.5" text-anchor="end" fill="#ccccdc" font-weight="normal"  textLength="28.18" lengthAdjust="spacingAndGlyphs" stroke="#ccccdc" stroke-width="0.2">0 p/s</text>
<rect x="1371.9" y="611.4" width="14.2" height="4" rx="1" fill="#b877d9"/>
<text x="1393.6" y="617.0" font-size="12.5" text-anchor="start" fill="#ccccdc" font-weight="normal"  textLength="58.46" lengthAdjust="spacingAndGlyphs" stroke="#ccccdc" stroke-width="0.2">IPv4:3:Out</text>
<text x="1535.8" y="617.0" font-size="12.5" text-anchor="end" fill="#ccccdc" font-weight="normal"  textLength="46.25" lengthAdjust="spacingAndGlyphs" stroke="#ccccdc" stroke-width="0.2">8.37 p/s</text>
<text x="1607.9" y="617.0" font-size="12.5" text-anchor="end" fill="#ccccdc" font-weight="normal"  textLength="53.47" lengthAdjust="spacingAndGlyphs" stroke="#ccccdc" stroke-width="0.2">306 mp/s</text>
<rect x="1371.9" y="635.3" width="14.2" height="4" rx="1" fill="#705da0"/>
<text x="1393.6" y="640.9" font-size="12.5" text-anchor="start" fill="#ccccdc" font-weight="normal"  textLength="58.46" lengthAdjust="spacingAndGlyphs" stroke="#ccccdc" stroke-width="0.2">IPv4:5:Out</text>
<text x="1535.8" y="640.9" font-size="12.5" text-anchor="end" fill="#ccccdc" font-weight="normal"  textLength="57.08" lengthAdjust="spacingAndGlyphs" stroke="#ccccdc" stroke-width="0.2">5.56 mp/s</text>
<text x="1607.9" y="640.9" font-size="12.5" text-anchor="end" fill="#ccccdc" font-weight="normal"  textLength="28.18" lengthAdjust="spacingAndGlyphs" stroke="#ccccdc" stroke-width="0.2">0 p/s</text>
<polyline points="16.3,673.9000000000001 19.8,677.4000000000001 23.3,673.9000000000001" fill="none" stroke="#ccccdc" stroke-width="1.4"/>
<text x="28.0" y="680.7" font-size="16.5" text-anchor="start" fill="#ccccdc" font-weight="bold" textLength="145" lengthAdjust="spacingAndGlyphs">Routing/Forwarding</text>
<rect x="12.5" y="698.5" width="1612" height="257" rx="2.5" fill="#181b1f" stroke="#25282d"/>
<path d="M13,701 Q13,699 15,699 L45,699 L13,731 Z" fill="#22252b"/>
<g fill="#a3a4ad"><rect x="19.6" y="703.3" width="2" height="1.9" rx="0.6"/><path d="M18.5,706.1 h3.0 v4.6 h1.0 v1.4 h-4.0 v-1.4 h1.0 v-3.2 h-1.0 z"/></g>
<text x="818.0" y="718.8" font-size="14" text-anchor="middle" fill="#ccccdc" font-weight="bold" letter-spacing="-0.3">Routing/Forwarding</text>
<line x1="40.9" y1="766.5" x2="1608.3" y2="766.5" stroke="#2c2e33" stroke-width="1" />
<text x="34.6" y="769.5" font-size="12" text-anchor="end" fill="#ccccdc" font-weight="normal"  textLength="14.01" lengthAdjust="spacingAndGlyphs" stroke="#ccccdc" stroke-width="0.25">40</text>
<line x1="40.9" y1="810.5" x2="1608.3" y2="810.5" stroke="#2c2e33" stroke-width="1" />
<text x="34.6" y="813.3" font-size="12" text-anchor="end" fill="#ccccdc" font-weight="normal"  textLength="14.01" lengthAdjust="spacingAndGlyphs" stroke="#ccccdc" stroke-width="0.25">20</text>
<line x1="40.9" y1="853.5" x2="1608.3" y2="853.5" stroke="#2c2e33" stroke-width="1" />
<text x="34.6" y="856.7" font-size="12" text-anchor="end" fill="#ccccdc" font-weight="normal"  textLength="7.01" lengthAdjust="spacingAndGlyphs" stroke="#ccccdc" stroke-width="0.25">0</text>
<line x1="49.5" y1="747.3" x2="49.5" y2="856.0" stroke="#2c2e33" stroke-width="1" />
<text x="49.5" y="871.2" font-size="12" text-anchor="middle" fill="#ccccdc" font-weight="normal"  textLength="31.23" lengthAdjust="spacingAndGlyphs" stroke="#ccccdc" stroke-width="0.25">10:40</text>
<line x1="179.5" y1="747.3" x2="179.5" y2="856.0" stroke="#2c2e33" stroke-width="1" />
<text x="179.9" y="871.2" font-size="12" text-anchor="middle" fill="#ccccdc" font-weight="normal"  textLength="31.23" lengthAdjust="spacingAndGlyphs" stroke="#ccccdc" stroke-width="0.25">10:45</text>
<line x1="310.5" y1="747.3" x2="310.5" y2="856.0" stroke="#2c2e33" stroke-width="1" />
<text x="310.3" y="871.2" font-size="12" text-anchor="middle" fill="#ccccdc" font-weight="normal"  textLength="31.23" lengthAdjust="spacingAndGlyphs" stroke="#ccccdc" stroke-width="0.25">10:50</text>
<line x1="440.5" y1="747.3" x2="440.5" y2="856.0" stroke="#2c2e33" stroke-width="1" />
<text x="440.7" y="871.2" font-size="12" text-anchor="middle" fill="#ccccdc" font-weight="normal"  textLength="31.23" lengthAdjust="spacingAndGlyphs" stroke="#ccccdc" stroke-width="0.25">10:55</text>
<line x1="571.5" y1="747.3" x2="571.5" y2="856.0" stroke="#2c2e33" stroke-width="1" />
<text x="571.1" y="871.2" font-size="12" text-anchor="middle" fill="#ccccdc" font-weight="normal"  textLength="30.30" lengthAdjust="spacingAndGlyphs" stroke="#ccccdc" stroke-width="0.25">11:00</text>
<line x1="701.5" y1="747.3" x2="701.5" y2="856.0" stroke="#2c2e33" stroke-width="1" />
<text x="701.5" y="871.2" font-size="12" text-anchor="middle" fill="#ccccdc" font-weight="normal"  textLength="30.30" lengthAdjust="spacingAndGlyphs" stroke="#ccccdc" stroke-width="0.25">11:05</text>
<line x1="831.5" y1="747.3" x2="831.5" y2="856.0" stroke="#2c2e33" stroke-width="1" />
<text x="831.9" y="871.2" font-size="12" text-anchor="middle" fill="#ccccdc" font-weight="normal"  textLength="30.30" lengthAdjust="spacingAndGlyphs" stroke="#ccccdc" stroke-width="0.25">11:10</text>
<line x1="962.5" y1="747.3" x2="962.5" y2="856.0" stroke="#2c2e33" stroke-width="1" />
<text x="962.3" y="871.2" font-size="12" text-anchor="middle" fill="#ccccdc" font-weight="normal"  textLength="30.30" lengthAdjust="spacingAndGlyphs" stroke="#ccccdc" stroke-width="0.25">11:15</text>
<line x1="1092.5" y1="747.3" x2="1092.5" y2="856.0" stroke="#2c2e33" stroke-width="1" />
<text x="1092.7" y="871.2" font-size="12" text-anchor="middle" fill="#ccccdc" font-weight="normal"  textLength="30.30" lengthAdjust="spacingAndGlyphs" stroke="#ccccdc" stroke-width="0.25">11:20</text>
<line x1="1223.5" y1="747.3" x2="1223.5" y2="856.0" stroke="#2c2e33" stroke-width="1" />
<text x="1223.1" y="871.2" font-size="12" text-anchor="middle" fill="#ccccdc" font-weight="normal"  textLength="30.30" lengthAdjust="spacingAndGlyphs" stroke="#ccccdc" stroke-width="0.25">11:25</text>
<line x1="1353.5" y1="747.3" x2="1353.5" y2="856.0" stroke="#2c2e33" stroke-width="1" />
<text x="1353.5" y="871.2" font-size="12" text-anchor="middle" fill="#ccccdc" font-weight="normal"  textLength="30.30" lengthAdjust="spacingAndGlyphs" stroke="#ccccdc" stroke-width="0.25">11:30</text>
<line x1="1483.5" y1="747.3" x2="1483.5" y2="856.0" stroke="#2c2e33" stroke-width="1" />
<text x="1483.9" y="871.2" font-size="12" text-anchor="middle" fill="#ccccdc" font-weight="normal"  textLength="30.30" lengthAdjust="spacingAndGlyphs" stroke="#ccccdc" stroke-width="0.25">11:35</text>
<polygon points="44.3,758.5 1561.5,758.5 1561.5,825.5 44.3,825.5" fill="rgb(177, 140, 31)" fill-opacity="0.15"/>
<polygon points="44.3,825.5 1561.5,825.5 1561.5,853.5 44.3,853.5" fill="rgb(174, 192, 146)" fill-opacity="0.2"/>
<polyline points="44.3,758.5 1561.5,758.5" fill="none" stroke="#f2cc0c" stroke-width="1.2" stroke-linejoin="round"/>
<polyline points="44.3,825.5 1561.5,825.5" fill="none" stroke="#8ab8ff" stroke-width="1.2" stroke-linejoin="round"/>
<polyline points="44.3,853.5 1561.5,853.5" fill="none" stroke="#73bf69" stroke-width="1.2" stroke-linejoin="round"/>
<line x1="1365.5" y1="747.3" x2="1365.5" y2="853.0" stroke="#6a8fa2" stroke-width="1" stroke-dasharray="3,2"/>
<text x="1568.0" y="889.2" font-size="12.5" text-anchor="end" fill="#6e9fff" font-weight="normal"  stroke="#6e9fff" stroke-width="0.45">Max</text>
<text x="1607.9" y="889.2" font-size="12.5" text-anchor="end" fill="#6e9fff" font-weight="normal"  stroke="#6e9fff" stroke-width="0.45">Last</text>
<rect x="1608.3" y="876" width="7.3" height="54" rx="3.5" fill="#35373c"/>
<line x1="21.0" y1="897.5" x2="1615.6" y2="897.5" stroke="#2a2d32" stroke-width="1" />
<line x1="21.0" y1="921.5" x2="1615.6" y2="921.5" stroke="#2a2d32" stroke-width="1" />
<line x1="21.0" y1="945.5" x2="1615.6" y2="945.5" stroke="#2a2d32" stroke-width="1" />
<rect x="28.7" y="907" width="14.4" height="4" rx="1" fill="#73bf69"/>
<text x="50.7" y="912.6" font-size="12.5" text-anchor="start" fill="#ccccdc" font-weight="normal"  textLength="98.35" lengthAdjust="spacingAndGlyphs" stroke="#ccccdc" stroke-width="0.2">Routes Discarded</text>
<text x="1568.0" y="912.6" font-size="12.5" text-anchor="end" fill="#ccccdc" font-weight="normal"  textLength="7.23" lengthAdjust="spacingAndGlyphs" stroke="#ccccdc" stroke-width="0.2">0</text>
<text x="1607.9" y="912.6" font-size="12.5" text-anchor="end" fill="#ccccdc" font-weight="normal"  textLength="7.23" lengthAdjust="spacingAndGlyphs" stroke="#ccccdc" stroke-width="0.2">0</text>
<rect x="28.7" y="931.2" width="14.4" height="4" rx="1" fill="#f2cc0c"/>
<text x="50.7" y="936.8" font-size="12.5" text-anchor="start" fill="#ccccdc" font-weight="normal"  textLength="74.97" lengthAdjust="spacingAndGlyphs" stroke="#ccccdc" stroke-width="0.2">Route Entries</text>
<text x="1568.0" y="936.8" font-size="12.5" text-anchor="end" fill="#ccccdc" font-weight="normal"  textLength="14.46" lengthAdjust="spacingAndGlyphs" stroke="#ccccdc" stroke-width="0.2">44</text>
<text x="1607.9" y="936.8" font-size="12.5" text-anchor="end" fill="#ccccdc" font-weight="normal"  textLength="14.46" lengthAdjust="spacingAndGlyphs" stroke="#ccccdc" stroke-width="0.2">44</text>
<polyline points="16.3,977.0 19.8,980.5 23.3,977.0" fill="none" stroke="#ccccdc" stroke-width="1.4"/>
<text x="28.0" y="983.8" font-size="16.5" text-anchor="start" fill="#ccccdc" font-weight="bold" textLength="46" lengthAdjust="spacingAndGlyphs">SNMP</text>
<rect x="12.5" y="1002.5" width="802" height="256" rx="2.5" fill="#181b1f" stroke="#25282d"/>
<path d="M13,1005 Q13,1003 15,1003 L45,1003 L13,1035 Z" fill="#22252b"/>
<g fill="#a3a4ad"><rect x="19.6" y="1007.3" width="2" height="1.9" rx="0.6"/><path d="M18.5,1010.1 h3.0 v4.6 h1.0 v1.4 h-4.0 v-1.4 h1.0 v-3.2 h-1.0 z"/></g>
<text x="413.0" y="1022.8" font-size="14" text-anchor="middle" fill="#ccccdc" font-weight="bold" letter-spacing="-0.3">SNMP Messages (/sec)</text>
<line x1="57.8" y1="1085.5" x2="558.8" y2="1085.5" stroke="#2c2e33" stroke-width="1" />
<text x="51.7" y="1088.6" font-size="12" text-anchor="end" fill="#ccccdc" font-weight="normal"  textLength="28.09" lengthAdjust="spacingAndGlyphs" stroke="#ccccdc" stroke-width="0.25">5 p/s</text>
<line x1="57.8" y1="1141.5" x2="558.8" y2="1141.5" stroke="#2c2e33" stroke-width="1" />
<text x="51.7" y="1144.4" font-size="12" text-anchor="end" fill="#ccccdc" font-weight="normal"  textLength="28.09" lengthAdjust="spacingAndGlyphs" stroke="#ccccdc" stroke-width="0.25">0 p/s</text>
<line x1="57.8" y1="1195.5" x2="558.8" y2="1195.5" stroke="#2c2e33" stroke-width="1" />
<text x="51.7" y="1199.0" font-size="12" text-anchor="end" fill="#ccccdc" font-weight="normal"  textLength="32.41" lengthAdjust="spacingAndGlyphs" stroke="#ccccdc" stroke-width="0.25">-5 p/s</text>
<line x1="63.5" y1="1051.5" x2="63.5" y2="1234.0" stroke="#2c2e33" stroke-width="1" />
<text x="63.6" y="1247.6" font-size="12" text-anchor="middle" fill="#ccccdc" font-weight="normal"  textLength="31.23" lengthAdjust="spacingAndGlyphs" stroke="#ccccdc" stroke-width="0.25">10:40</text>
<line x1="146.5" y1="1051.5" x2="146.5" y2="1234.0" stroke="#2c2e33" stroke-width="1" />
<text x="146.4" y="1247.6" font-size="12" text-anchor="middle" fill="#ccccdc" font-weight="normal"  textLength="31.23" lengthAdjust="spacingAndGlyphs" stroke="#ccccdc" stroke-width="0.25">10:50</text>
<line x1="229.5" y1="1051.5" x2="229.5" y2="1234.0" stroke="#2c2e33" stroke-width="1" />
<text x="229.2" y="1247.6" font-size="12" text-anchor="middle" fill="#ccccdc" font-weight="normal"  textLength="30.30" lengthAdjust="spacingAndGlyphs" stroke="#ccccdc" stroke-width="0.25">11:00</text>
<line x1="311.5" y1="1051.5" x2="311.5" y2="1234.0" stroke="#2c2e33" stroke-width="1" />
<text x="311.9" y="1247.6" font-size="12" text-anchor="middle" fill="#ccccdc" font-weight="normal"  textLength="30.30" lengthAdjust="spacingAndGlyphs" stroke="#ccccdc" stroke-width="0.25">11:10</text>
<line x1="394.5" y1="1051.5" x2="394.5" y2="1234.0" stroke="#2c2e33" stroke-width="1" />
<text x="394.7" y="1247.6" font-size="12" text-anchor="middle" fill="#ccccdc" font-weight="normal"  textLength="30.30" lengthAdjust="spacingAndGlyphs" stroke="#ccccdc" stroke-width="0.25">11:20</text>
<line x1="477.5" y1="1051.5" x2="477.5" y2="1234.0" stroke="#2c2e33" stroke-width="1" />
<text x="477.5" y="1247.6" font-size="12" text-anchor="middle" fill="#ccccdc" font-weight="normal"  textLength="30.30" lengthAdjust="spacingAndGlyphs" stroke="#ccccdc" stroke-width="0.25">11:30</text>
<polygon points="61.2,1072.5 63.6,1072.5 80.2,1072.5 96.7,1072.5 113.3,1072.5 129.8,1072.5 146.4,1072.5 162.9,1072.5 179.5,1073.3 196.0,1073.3 212.6,1072.5 229.2,1072.5 245.7,1072.5 262.3,1072.5 278.8,1072.5 295.4,1072.5 311.9,1073.3 328.5,1072.5 345.1,1072.5 361.6,1072.5 378.2,1071.0 394.7,1072.5 411.3,1072.5 427.8,1072.5 444.4,1072.5 460.9,1072.5 477.5,1072.5 494.1,1070.5 510.6,1070.5 527.2,1072.5 544.8,1072.5 544.8,1116.5 527.2,1116.5 510.6,1116.5 494.1,1116.5 477.5,1117.5 460.9,1116.5 444.4,1116.5 427.8,1116.5 411.3,1116.5 394.7,1116.5 378.2,1116.5 361.6,1116.5 345.1,1116.5 328.5,1116.5 311.9,1117.5 295.4,1116.5 278.8,1116.5 262.3,1116.5 245.7,1116.5 229.2,1116.5 212.6,1116.5 196.0,1117.5 179.5,1117.5 162.9,1116.5 146.4,1116.5 129.8,1116.5 113.3,1116.5 96.7,1116.5 80.2,1116.5 63.6,1116.5 61.2,1116.5" fill="rgb(91, 127, 78)" fill-opacity="0.15"/>
<polygon points="61.2,1116.5 63.6,1116.5 80.2,1116.5 96.7,1116.5 113.3,1116.5 129.8,1116.5 146.4,1116.5 162.9,1116.5 179.5,1117.5 196.0,1117.5 212.6,1116.5 229.2,1116.5 245.7,1116.5 262.3,1116.5 278.8,1116.5 295.4,1116.5 311.9,1117.5 328.5,1116.5 345.1,1116.5 361.6,1116.5 378.2,1116.5 394.7,1116.5 411.3,1116.5 427.8,1116.5 444.4,1116.5 460.9,1116.5 477.5,1117.5 494.1,1116.5 510.6,1116.5 527.2,1116.5 544.8,1116.5 544.8,1127.5 61.2,1127.5" fill="rgb(137, 200, 231)" fill-opacity="0.15"/>
<polygon points="61.2,1127.5 544.8,1127.5 544.8,1141.3 61.2,1141.3" fill="rgb(239, 212, 146)" fill-opacity="0.2"/>
<polygon points="61.2,1141.3 544.8,1141.3 544.8,1209.5 527.2,1209.5 510.6,1211.0 494.1,1211.0 477.5,1208.3 460.9,1209.5 444.4,1209.5 427.8,1209.5 411.3,1209.5 394.7,1209.5 378.2,1211.0 361.6,1209.5 345.1,1209.5 328.5,1209.5 311.9,1208.3 295.4,1209.5 278.8,1209.5 262.3,1209.5 245.7,1209.5 229.2,1209.5 212.6,1209.5 196.0,1208.5 179.5,1208.5 162.9,1209.5 146.4,1209.5 129.8,1209.5 113.3,1209.5 96.7,1209.5 80.2,1209.5 63.6,1209.5 61.2,1209.5" fill="rgb(217, 180, 118)" fill-opacity="0.15"/>
<polyline points="61.2,1072.5 63.6,1072.5 80.2,1072.5 96.7,1072.5 113.3,1072.5 129.8,1072.5 146.4,1072.5 162.9,1072.5 179.5,1073.3 196.0,1073.3 212.6,1072.5 229.2,1072.5 245.7,1072.5 262.3,1072.5 278.8,1072.5 295.4,1072.5 311.9,1073.3 328.5,1072.5 345.1,1072.5 361.6,1072.5 378.2,1071.0 394.7,1072.5 411.3,1072.5 427.8,1072.5 444.4,1072.5 460.9,1072.5 477.5,1072.5 494.1,1070.5 510.6,1070.5 527.2,1072.5 544.8,1072.5" fill="none" stroke="#73bf69" stroke-width="1.2" stroke-linejoin="round"/>
<polyline points="61.2,1116.5 63.6,1116.5 80.2,1116.5 96.7,1116.5 113.3,1116.5 129.8,1116.5 146.4,1116.5 162.9,1116.5 179.5,1117.5 196.0,1117.5 212.6,1116.5 229.2,1116.5 245.7,1116.5 262.3,1116.5 278.8,1116.5 295.4,1116.5 311.9,1117.5 328.5,1116.5 345.1,1116.5 361.6,1116.5 378.2,1116.5 394.7,1116.5 411.3,1116.5 427.8,1116.5 444.4,1116.5 460.9,1116.5 477.5,1117.5 494.1,1116.5 510.6,1116.5 527.2,1116.5 544.8,1116.5" fill="none" stroke="#8ab8ff" stroke-width="1.2" stroke-linejoin="round"/>
<polyline points="61.2,1127.5 544.8,1127.5" fill="none" stroke="#ff780a" stroke-width="1.2" stroke-linejoin="round"/>
<polyline points="61.2,1141.5 544.8,1141.5" fill="none" stroke="#b877d9" stroke-width="1.2" stroke-linejoin="round"/>
<polyline points="61.2,1209.5 63.6,1209.5 80.2,1209.5 96.7,1209.5 113.3,1209.5 129.8,1209.5 146.4,1209.5 162.9,1209.5 179.5,1208.5 196.0,1208.5 212.6,1209.5 229.2,1209.5 245.7,1209.5 262.3,1209.5 278.8,1209.5 295.4,1209.5 311.9,1208.3 328.5,1209.5 345.1,1209.5 361.6,1209.5 378.2,1211.0 394.7,1209.5 411.3,1209.5 427.8,1209.5 444.4,1209.5 460.9,1209.5 477.5,1208.3 494.1,1211.0 510.6,1211.0 527.2,1209.5 544.8,1209.5" fill="none" stroke="#705da0" stroke-width="1.2" stroke-linejoin="round"/>
<line x1="481.5" y1="1051.5" x2="481.5" y2="1230.0" stroke="#6a8fa2" stroke-width="1" stroke-dasharray="3,2"/>
<text x="736.4" y="1058.2" font-size="12.5" text-anchor="end" fill="#6e9fff" font-weight="normal"  stroke="#6e9fff" stroke-width="0.45">Max</text>
<text x="797.5" y="1058.2" font-size="12.5" text-anchor="end" fill="#6e9fff" font-weight="normal"  stroke="#6e9fff" stroke-width="0.45">Last</text>
<rect x="798.7" y="1045" width="7.099999999999909" height="197" rx="3.5" fill="#35373c"/>
<line x1="567.0" y1="1066.5" x2="805.8" y2="1066.5" stroke="#2a2d32" stroke-width="1" />
<line x1="567.0" y1="1090.5" x2="805.8" y2="1090.5" stroke="#2a2d32" stroke-width="1" />
<line x1="567.0" y1="1114.5" x2="805.8" y2="1114.5" stroke="#2a2d32" stroke-width="1" />
<line x1="567.0" y1="1138.5" x2="805.8" y2="1138.5" stroke="#2a2d32" stroke-width="1" />
<line x1="567.0" y1="1162.5" x2="805.8" y2="1162.5" stroke="#2a2d32" stroke-width="1" />
<line x1="567.0" y1="1186.5" x2="805.8" y2="1186.5" stroke="#2a2d32" stroke-width="1" />
<line x1="567.0" y1="1210.5" x2="805.8" y2="1210.5" stroke="#2a2d32" stroke-width="1" />
<line x1="567.0" y1="1233.5" x2="805.8" y2="1233.5" stroke="#2a2d32" stroke-width="1" />
<rect x="574.9" y="1076.4" width="14.2" height="4" rx="1" fill="#73bf69"/>
<text x="596.8" y="1082.0" font-size="12.5" text-anchor="start" fill="#ccccdc" font-weight="normal"  textLength="70.15" lengthAdjust="spacingAndGlyphs" stroke="#ccccdc" stroke-width="0.2">Messages:In</text>
<text x="736.4" y="1082.0" font-size="12.5" text-anchor="end" fill="#ccccdc" font-weight="normal"  textLength="46.25" lengthAdjust="spacingAndGlyphs" stroke="#ccccdc" stroke-width="0.2">6.34 p/s</text>
<text x="797.5" y="1082.0" font-size="12.5" text-anchor="end" fill="#ccccdc" font-weight="normal"  textLength="46.25" lengthAdjust="spacingAndGlyphs" stroke="#ccccdc" stroke-width="0.2">6.10 p/s</text>
<rect x="574.9" y="1100.3200000000002" width="14.2" height="4" rx="1" fill="#f2cc0c"/>
<text x="596.8" y="1105.9" font-size="12.5" text-anchor="start" fill="#ccccdc" font-weight="normal"  textLength="79.78" lengthAdjust="spacingAndGlyphs" stroke="#ccccdc" stroke-width="0.2">Messages:Out</text>
<text x="736.4" y="1105.9" font-size="12.5" text-anchor="end" fill="#ccccdc" font-weight="normal"  textLength="46.25" lengthAdjust="spacingAndGlyphs" stroke="#ccccdc" stroke-width="0.2">6.32 p/s</text>
<text x="797.5" y="1105.9" font-size="12.5" text-anchor="end" fill="#ccccdc" font-weight="normal"  textLength="46.25" lengthAdjust="spacingAndGlyphs" stroke="#ccccdc" stroke-width="0.2">6.10 p/s</text>
<rect x="574.9" y="1124.24" width="14.2" height="4" rx="1" fill="#8ab8ff"/>
<text x="596.8" y="1129.8" font-size="12.5" text-anchor="start" fill="#ccccdc" font-weight="normal"  textLength="59.15" lengthAdjust="spacingAndGlyphs" stroke="#ccccdc" stroke-width="0.2">GetNext:In</text>
<text x="736.4" y="1129.8" font-size="12.5" text-anchor="end" fill="#ccccdc" font-weight="normal"  textLength="46.25" lengthAdjust="spacingAndGlyphs" stroke="#ccccdc" stroke-width="0.2">2.20 p/s</text>
<text x="797.5" y="1129.8" font-size="12.5" text-anchor="end" fill="#ccccdc" font-weight="normal"  textLength="46.25" lengthAdjust="spacingAndGlyphs" stroke="#ccccdc" stroke-width="0.2">2.20 p/s</text>
<rect x="574.9" y="1148.16" width="14.2" height="4" rx="1" fill="#ff780a"/>
<text x="596.8" y="1153.8" font-size="12.5" text-anchor="start" fill="#ccccdc" font-weight="normal"  textLength="56.40" lengthAdjust="spacingAndGlyphs" stroke="#ccccdc" stroke-width="0.2">GetReq:In</text>
<text x="736.4" y="1153.8" font-size="12.5" text-anchor="end" fill="#ccccdc" font-weight="normal"  textLength="46.25" lengthAdjust="spacingAndGlyphs" stroke="#ccccdc" stroke-width="0.2">1.22 p/s</text>
<text x="797.5" y="1153.8" font-size="12.5" text-anchor="end" fill="#ccccdc" font-weight="normal"  textLength="46.25" lengthAdjust="spacingAndGlyphs" stroke="#ccccdc" stroke-width="0.2">1.20 p/s</text>
<rect x="574.9" y="1172.0800000000002" width="14.2" height="4" rx="1" fill="#f2495c"/>
<text x="596.8" y="1177.7" font-size="12.5" text-anchor="start" fill="#ccccdc" font-weight="normal"  textLength="62.59" lengthAdjust="spacingAndGlyphs" stroke="#ccccdc" stroke-width="0.2">GetResp:In</text>
<text x="736.4" y="1177.7" font-size="12.5" text-anchor="end" fill="#ccccdc" font-weight="normal"  textLength="28.18" lengthAdjust="spacingAndGlyphs" stroke="#ccccdc" stroke-width="0.2">0 p/s</text>
<text x="797.5" y="1177.7" font-size="12.5" text-anchor="end" fill="#ccccdc" font-weight="normal"  textLength="28.18" lengthAdjust="spacingAndGlyphs" stroke="#ccccdc" stroke-width="0.2">0 p/s</text>
<rect x="574.9" y="1196.0" width="14.2" height="4" rx="1" fill="#5794f2"/>
<text x="596.8" y="1201.6" font-size="12.5" text-anchor="start" fill="#ccccdc" font-weight="normal"  textLength="68.77" lengthAdjust="spacingAndGlyphs" stroke="#ccccdc" stroke-width="0.2">GetNext:Out</text>
<text x="736.4" y="1201.6" font-size="12.5" text-anchor="end" fill="#ccccdc" font-weight="normal"  textLength="28.18" lengthAdjust="spacingAndGlyphs" stroke="#ccccdc" stroke-width="0.2">0 p/s</text>
<text x="797.5" y="1201.6" font-size="12.5" text-anchor="end" fill="#ccccdc" font-weight="normal"  textLength="28.18" lengthAdjust="spacingAndGlyphs" stroke="#ccccdc" stroke-width="0.2">0 p/s</text>
<rect x="574.9" y="1219.92" width="14.2" height="4" rx="1" fill="#b877d9"/>
<text x="596.8" y="1225.5" font-size="12.5" text-anchor="start" fill="#ccccdc" font-weight="normal"  textLength="66.03" lengthAdjust="spacingAndGlyphs" stroke="#ccccdc" stroke-width="0.2">GetReq:Out</text>
<text x="736.4" y="1225.5" font-size="12.5" text-anchor="end" fill="#ccccdc" font-weight="normal"  textLength="28.18" lengthAdjust="spacingAndGlyphs" stroke="#ccccdc" stroke-width="0.2">0 p/s</text>
<text x="797.5" y="1225.5" font-size="12.5" text-anchor="end" fill="#ccccdc" font-weight="normal"  textLength="28.18" lengthAdjust="spacingAndGlyphs" stroke="#ccccdc" stroke-width="0.2">0 p/s</text>
<rect x="574.9" y="1243.8400000000001" width="14.2" height="4" rx="1" fill="#705da0"/>
<text x="596.8" y="1249.4" font-size="12.5" text-anchor="start" fill="#ccccdc" font-weight="normal"  textLength="72.22" lengthAdjust="spacingAndGlyphs" stroke="#ccccdc" stroke-width="0.2">GetResp:Out</text>
<text x="736.4" y="1249.4" font-size="12.5" text-anchor="end" fill="#ccccdc" font-weight="normal"  textLength="46.25" lengthAdjust="spacingAndGlyphs" stroke="#ccccdc" stroke-width="0.2">6.32 p/s</text>
<text x="797.5" y="1249.4" font-size="12.5" text-anchor="end" fill="#ccccdc" font-weight="normal"  textLength="46.25" lengthAdjust="spacingAndGlyphs" stroke="#ccccdc" stroke-width="0.2">6.10 p/s</text>
<rect x="822.5" y="1002.5" width="802" height="256" rx="2.5" fill="#181b1f" stroke="#25282d"/>
<path d="M823,1005 Q823,1003 825,1003 L855,1003 L823,1035 Z" fill="#22252b"/>
<g fill="#a3a4ad"><rect x="829.6" y="1007.3" width="2" height="1.9" rx="0.6"/><path d="M828.5,1010.1 h3.0 v4.6 h1.0 v1.4 h-4.0 v-1.4 h1.0 v-3.2 h-1.0 z"/></g>
<text x="1223.0" y="1022.8" font-size="14" text-anchor="middle" fill="#ccccdc" font-weight="bold" letter-spacing="-0.3">SNMP Objects Fetched (/sec)</text>
<line x1="857.5" y1="1076.5" x2="1608.6" y2="1076.5" stroke="#2c2e33" stroke-width="1" />
<text x="851.6" y="1079.4" font-size="12" text-anchor="end" fill="#ccccdc" font-weight="normal"  textLength="21.02" lengthAdjust="spacingAndGlyphs" stroke="#ccccdc" stroke-width="0.25">130</text>
<line x1="857.5" y1="1114.5" x2="1608.6" y2="1114.5" stroke="#2c2e33" stroke-width="1" />
<text x="851.6" y="1117.5" font-size="12" text-anchor="end" fill="#ccccdc" font-weight="normal"  textLength="21.02" lengthAdjust="spacingAndGlyphs" stroke="#ccccdc" stroke-width="0.25">128</text>
<line x1="857.5" y1="1152.5" x2="1608.6" y2="1152.5" stroke="#2c2e33" stroke-width="1" />
<text x="851.6" y="1155.4" font-size="12" text-anchor="end" fill="#ccccdc" font-weight="normal"  textLength="21.02" lengthAdjust="spacingAndGlyphs" stroke="#ccccdc" stroke-width="0.25">126</text>
<line x1="863.5" y1="1051.8" x2="863.5" y2="1185.7" stroke="#2c2e33" stroke-width="1" />
<text x="863.0" y="1200.1" font-size="12" text-anchor="middle" fill="#ccccdc" font-weight="normal"  textLength="31.23" lengthAdjust="spacingAndGlyphs" stroke="#ccccdc" stroke-width="0.25">10:40</text>
<line x1="925.5" y1="1051.8" x2="925.5" y2="1185.7" stroke="#2c2e33" stroke-width="1" />
<text x="925.3" y="1200.1" font-size="12" text-anchor="middle" fill="#ccccdc" font-weight="normal"  textLength="31.23" lengthAdjust="spacingAndGlyphs" stroke="#ccccdc" stroke-width="0.25">10:45</text>
<line x1="987.5" y1="1051.8" x2="987.5" y2="1185.7" stroke="#2c2e33" stroke-width="1" />
<text x="987.7" y="1200.1" font-size="12" text-anchor="middle" fill="#ccccdc" font-weight="normal"  textLength="31.23" lengthAdjust="spacingAndGlyphs" stroke="#ccccdc" stroke-width="0.25">10:50</text>
<line x1="1049.5" y1="1051.8" x2="1049.5" y2="1185.7" stroke="#2c2e33" stroke-width="1" />
<text x="1050.0" y="1200.1" font-size="12" text-anchor="middle" fill="#ccccdc" font-weight="normal"  textLength="31.23" lengthAdjust="spacingAndGlyphs" stroke="#ccccdc" stroke-width="0.25">10:55</text>
<line x1="1112.5" y1="1051.8" x2="1112.5" y2="1185.7" stroke="#2c2e33" stroke-width="1" />
<text x="1112.3" y="1200.1" font-size="12" text-anchor="middle" fill="#ccccdc" font-weight="normal"  textLength="30.30" lengthAdjust="spacingAndGlyphs" stroke="#ccccdc" stroke-width="0.25">11:00</text>
<line x1="1174.5" y1="1051.8" x2="1174.5" y2="1185.7" stroke="#2c2e33" stroke-width="1" />
<text x="1174.7" y="1200.1" font-size="12" text-anchor="middle" fill="#ccccdc" font-weight="normal"  textLength="30.30" lengthAdjust="spacingAndGlyphs" stroke="#ccccdc" stroke-width="0.25">11:05</text>
<line x1="1236.5" y1="1051.8" x2="1236.5" y2="1185.7" stroke="#2c2e33" stroke-width="1" />
<text x="1237.0" y="1200.1" font-size="12" text-anchor="middle" fill="#ccccdc" font-weight="normal"  textLength="30.30" lengthAdjust="spacingAndGlyphs" stroke="#ccccdc" stroke-width="0.25">11:10</text>
<line x1="1299.5" y1="1051.8" x2="1299.5" y2="1185.7" stroke="#2c2e33" stroke-width="1" />
<text x="1299.3" y="1200.1" font-size="12" text-anchor="middle" fill="#ccccdc" font-weight="normal"  textLength="30.30" lengthAdjust="spacingAndGlyphs" stroke="#ccccdc" stroke-width="0.25">11:15</text>
<line x1="1361.5" y1="1051.8" x2="1361.5" y2="1185.7" stroke="#2c2e33" stroke-width="1" />
<text x="1361.6" y="1200.1" font-size="12" text-anchor="middle" fill="#ccccdc" font-weight="normal"  textLength="30.30" lengthAdjust="spacingAndGlyphs" stroke="#ccccdc" stroke-width="0.25">11:20</text>
<line x1="1423.5" y1="1051.8" x2="1423.5" y2="1185.7" stroke="#2c2e33" stroke-width="1" />
<text x="1424.0" y="1200.1" font-size="12" text-anchor="middle" fill="#ccccdc" font-weight="normal"  textLength="30.30" lengthAdjust="spacingAndGlyphs" stroke="#ccccdc" stroke-width="0.25">11:25</text>
<line x1="1486.5" y1="1051.8" x2="1486.5" y2="1185.7" stroke="#2c2e33" stroke-width="1" />
<text x="1486.3" y="1200.1" font-size="12" text-anchor="middle" fill="#ccccdc" font-weight="normal"  textLength="30.30" lengthAdjust="spacingAndGlyphs" stroke="#ccccdc" stroke-width="0.25">11:30</text>
<line x1="1548.5" y1="1051.8" x2="1548.5" y2="1185.7" stroke="#2c2e33" stroke-width="1" />
<text x="1548.6" y="1200.1" font-size="12" text-anchor="middle" fill="#ccccdc" font-weight="normal"  textLength="30.30" lengthAdjust="spacingAndGlyphs" stroke="#ccccdc" stroke-width="0.25">11:35</text>
<polygon points="861.2,1182.7 861.2,1168.1 863.0,1169.3 887.9,1169.3 912.9,1169.3 937.8,1169.3 962.7,1159.5 987.6,1159.5 1012.6,1169.3 1037.5,1170.6 1062.4,1170.6 1087.4,1169.3 1112.3,1159.5 1137.2,1169.3 1162.2,1169.3 1187.1,1169.3 1212.0,1169.5 1237.0,1160.6 1261.9,1159.2 1286.8,1169.5 1311.7,1169.5 1336.7,1073.6 1361.6,1169.5 1386.5,1159.2 1411.5,1169.5 1436.4,1169.5 1461.3,1169.5 1486.2,1170.8 1511.2,1063.4 1536.1,1063.4 1561.0,1169.5 1586.3,1169.5 1586.3,1182.7" fill="#73bf69" fill-opacity="0.1"/>
<polyline points="861.2,1168.1 863.0,1169.3 887.9,1169.3 912.9,1169.3 937.8,1169.3 962.7,1159.5 987.6,1159.5 1012.6,1169.3 1037.5,1170.6 1062.4,1170.6 1087.4,1169.3 1112.3,1159.5 1137.2,1169.3 1162.2,1169.3 1187.1,1169.3 1212.0,1169.5 1237.0,1160.6 1261.9,1159.2 1286.8,1169.5 1311.7,1169.5 1336.7,1073.6 1361.6,1169.5 1386.5,1159.2 1411.5,1169.5 1436.4,1169.5 1461.3,1169.5 1486.2,1170.8 1511.2,1063.4 1536.1,1063.4 1561.0,1169.5 1586.3,1169.5" fill="none" stroke="#73bf69" stroke-width="1.2" stroke-linejoin="round"/>
<line x1="1492.5" y1="1051.8" x2="1492.5" y2="1182.0" stroke="#6a8fa2" stroke-width="1" stroke-dasharray="3,2"/>
<text x="1567.7" y="1218.0" font-size="12.5" text-anchor="end" fill="#6e9fff" font-weight="normal"  stroke="#6e9fff" stroke-width="0.45">Max</text>
<text x="1607.8" y="1218.0" font-size="12.5" text-anchor="end" fill="#6e9fff" font-weight="normal"  stroke="#6e9fff" stroke-width="0.45">Last</text>
<line x1="830.7" y1="1226.5" x2="1615.9" y2="1226.5" stroke="#2a2d32" stroke-width="1" />
<line x1="830.7" y1="1250.5" x2="1615.9" y2="1250.5" stroke="#2a2d32" stroke-width="1" />
<rect x="839" y="1236.8" width="14" height="4" rx="1" fill="#73bf69"/>
<text x="861.0" y="1242.0" font-size="12.5" text-anchor="start" fill="#ccccdc" font-weight="normal"  textLength="41.95" lengthAdjust="spacingAndGlyphs" stroke="#ccccdc" stroke-width="0.2">Objects</text>
<text x="1567.7" y="1242.0" font-size="12.5" text-anchor="end" fill="#ccccdc" font-weight="normal"  textLength="21.69" lengthAdjust="spacingAndGlyphs" stroke="#ccccdc" stroke-width="0.2">131</text>
<text x="1607.8" y="1242.0" font-size="12.5" text-anchor="end" fill="#ccccdc" font-weight="normal"  textLength="21.69" lengthAdjust="spacingAndGlyphs" stroke="#ccccdc" stroke-width="0.2">125</text>
<rect x="1633" y="1009" width="7.3" height="264" rx="3.6" fill="#2c2e33"/>
<line x1="1641.5" y1="0.0" x2="1641.5" y2="1277.0" stroke="#3a3c40" stroke-width="1" />
<line x1="1640.5" y1="0.0" x2="1640.5" y2="1277.0" stroke="#0d0e11" stroke-width="1" />
<rect x="0" y="1276" width="1642" height="1" rx="0" fill="#2f6a94"  />
</svg></body></html>
